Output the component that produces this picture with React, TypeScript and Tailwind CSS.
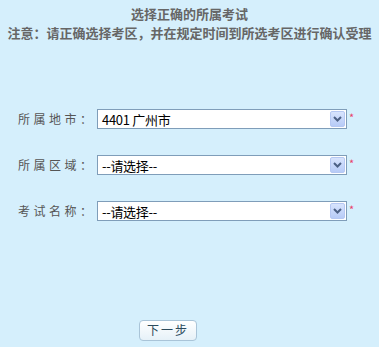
import React from "react";

const rows = [
  { label: "所属地市：", value: "4401 广州市" },
  { label: "所属区域：", value: "--请选择--" },
  { label: "考试名称：", value: "--请选择--" },
];

const Chevron = () => (
  <svg width="9" height="6" viewBox="0 0 9 6">
    <polyline points="1,1 4.5,4.5 8,1" fill="none" stroke="#4d6185" strokeWidth="2" />
  </svg>
);

const FakeSelect = ({ value }: { value: string }) => (
  <div className="flex h-[20px] w-[250px] shrink-0 items-center border border-[#7f9db9] bg-white">
    <span className="flex-1 pl-[4px] text-[13px] leading-none text-black tracking-[-0.3px]">
      {value}
    </span>
    <div className="mr-[1px] flex h-[16px] w-[15px] items-center justify-center rounded-[2px] border border-[#b6c8f3] bg-gradient-to-b from-[#d8e4fd] to-[#b7cbf7]">
      <Chevron />
    </div>
  </div>
);

export default function App() {
  return (
    <div
      className="flex h-[347px] w-full flex-col bg-[#d5effc]"
      style={{ fontFamily: '"Noto Sans CJK SC", "Liberation Sans", sans-serif' }}
    >
      <div className="pt-[4px] text-center text-[13px] font-bold leading-[19px] text-[#666]">
        <div>选择正确的所属考试</div>
        <div>注意：请正确选择考区，并在规定时间到所选考区进行确认受理</div>
      </div>

      <div className="mt-[67px] flex flex-col gap-[26px]">
        {rows.map((r) => (
          <div key={r.label} className="flex items-center">
            <span className="w-[97px] shrink-0 pl-[18px] text-[12px] leading-none tracking-[3.5px] text-[#555] whitespace-nowrap">
              {r.label}
            </span>
            <FakeSelect value={r.value} />
            <span className="ml-[2px] self-start pt-[3px] text-[11px] leading-none text-[#e8406a]">*</span>
          </div>
        ))}
      </div>

      <div className="ml-[139px] mt-[95px]">
        <button className="h-[21px] w-[58px] rounded-[4px] border border-[#a9c4d8] bg-gradient-to-b from-white to-[#e6f1f8] text-[12px] leading-none tracking-[2px] text-[#2b4a5c]">
          下一步
        </button>
      </div>
    </div>
  );
}
